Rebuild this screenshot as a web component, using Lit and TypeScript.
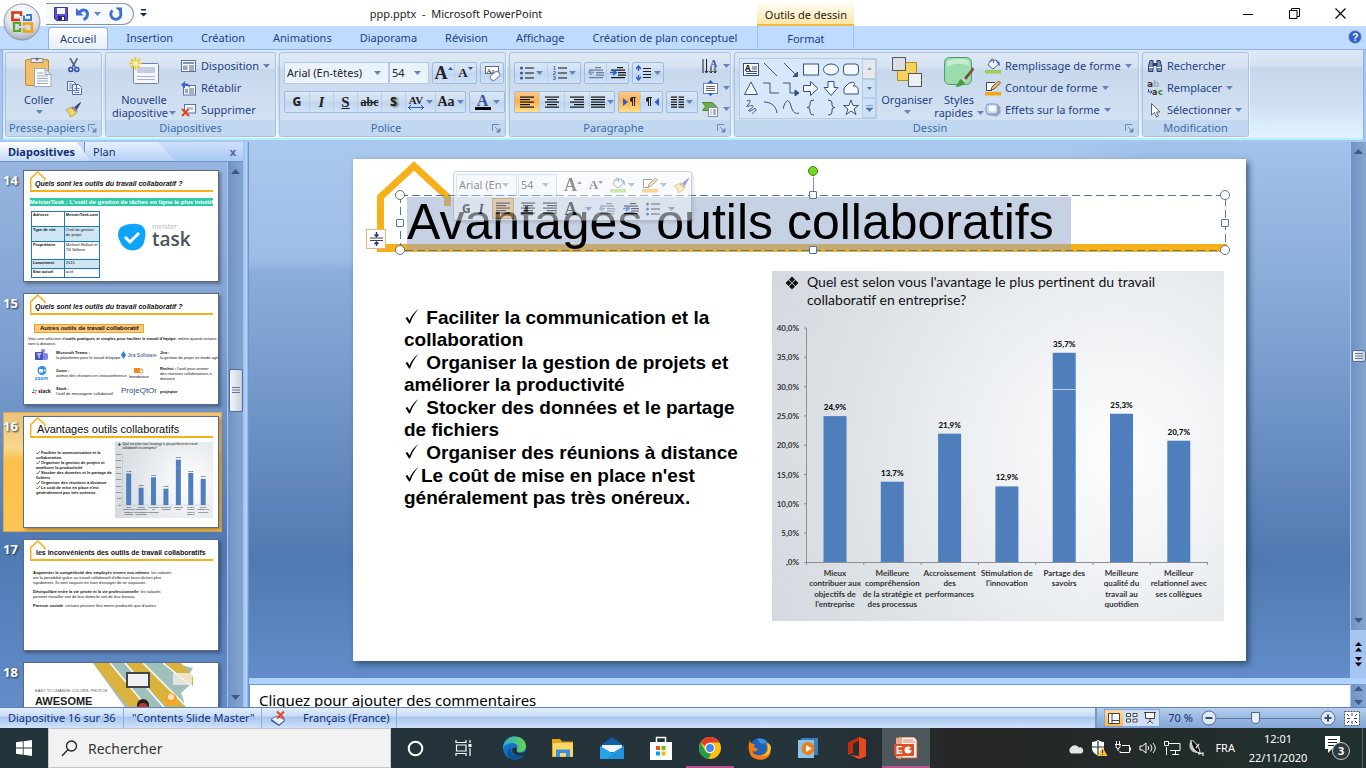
import { LitElement, html, svg, css } from "lit";
import { customElement } from "lit/decorators.js";
import { classMap } from "lit/directives/class-map.js";

const ic = (w: number, h: number, c: unknown) =>
  html`<svg class="ic" width=${w} height=${h} viewBox="0 0 ${w} ${h}" aria-hidden="true">${c}</svg>`;

const caret = html`<svg class="ic caret" width="7" height="4" viewBox="0 0 7 4" aria-hidden="true"><path d="M0 0h7L3.500 4z" fill="#5f86bd"/></svg>`;

const lines = (rows: [number, number][], color = "#111", y0 = 0) =>
  rows.map(([x, w], i) => svg`<rect x=${x} y=${y0 + i * 2.5} width=${w} height="1.200" fill=${color} />`);

/* ---------- ribbon icons ---------- */
const I = {
  office: () => ic(38, 38, svg`
    <defs><radialGradient id="orb" cx=".5" cy=".25" r=".8"><stop offset="0" stop-color="#fff"/><stop offset=".6" stop-color="#dfe3ea"/><stop offset="1" stop-color="#9aa3b4"/></radialGradient></defs>
    <circle cx="19" cy="19" r="18" fill="url(#orb)" stroke="#8b95a8"/>
    <path d="M8 21a11 8 0 0 1 22 0a12 12 0 0 1-22 0z" fill="#c3cad8" opacity=".5"/>
    <g fill="none" stroke-width="2.600">
      <path d="M17 17H9.500V9.500H18v3.500" stroke="#d4380f"/>
      <path d="M21 12.500V17h7v-5h-5" stroke="#3b7fc4" stroke-width="2"/>
      <path d="M17 23v-3h-6v8h6v-3" stroke="#59a52c" stroke-width="2.200"/>
      <path d="M21 25v3.500h8V20.500h-8v2" stroke="#f2a20c"/></g>`),
  save: () => ic(14, 14, svg`<path d="M.5.5h13v13h-11l-2-2z" fill="#5a55c9" stroke="#3a3596"/><rect x="3" y="1" width="8" height="6" fill="#f3f6ff"/><rect x="4" y="9" width="7" height="4.500" fill="#2c2878"/><rect x="8" y="10" width="2" height="3" fill="#fff"/>`),
  undo: () => ic(14, 14, svg`<path d="M0 1v7.500h7.500z" fill="#3e6fd0"/><path d="M3 6C6 1.500 11.500 2.500 11.500 7C11.500 10 10 11.500 7.500 12.500" fill="none" stroke="#3e6fd0" stroke-width="3"/>`),
  redo: () => ic(14, 14, svg`<path d="M3.500 3.500A5 5 0 1 0 11 4.500" fill="none" stroke="#3e6fd0" stroke-width="3"/><path d="M6.500.5h6.500V7z" fill="#3e6fd0"/>`),
  qat: () => ic(7, 8, svg`<path d="M1 0h5v1.400H1zM0 4h7L3.500 7.500z" fill="#15294f"/>`),
  paste: () => ic(28, 31, svg`<rect x=".5" y="2.500" width="23" height="26" rx="1.500" fill="#efc069" stroke="#c08c37"/><path d="M6 1.500h12v4H6z" fill="#e9e9ec" stroke="#85868c"/><circle cx="12" cy="2" r="1.600" fill="#6f7076"/><path d="M9.500 11.500H20l6 6v12H9.500z" fill="#fff" stroke="#9aa9c2"/><path d="M20 11.500v6h6z" fill="#dce6f4" stroke="#9aa9c2"/><path d="M12 16h6M12 19h11M12 21.500h11M12 24h11M12 26.500h11" stroke="#93a4c4" fill="none"/>`),
  cut: () => ic(12, 15, svg`<path d="M2 0l5 9M9.500 0l-5 9" stroke="#56657f" stroke-width="1.600"/><circle cx="2.800" cy="11.500" r="2" fill="none" stroke="#2c4fa5" stroke-width="1.500"/><circle cx="8.800" cy="11.500" r="2" fill="none" stroke="#2c4fa5" stroke-width="1.500"/>`),
  copy: () => ic(15, 14, svg`<path d="M.5.5h6l3 3v6h-9zM5.500 3.500h6l3 3v7h-9z" fill="#f5f9ff" stroke="#4c6fb4"/><path d="M2 3h3M2 5h3M2 7h3M7.500 7.500h5M7.500 9.500h5M7.500 11.500h5" stroke="#5f84c8"/>`),
  brush: () => ic(16, 15, svg`<path d="M14.500.5l-6 5 2 2z" fill="#4b4f93" stroke="#33376f"/><path d="M7 4l5 5-2 1-5-4z" fill="#8d8fa5"/><path d="M5 5.500l5.500 5C9 13 6 14.500 4 14.500C4 12 1.500 8.500 0 8z" fill="#f2d66b" stroke="#a58625" stroke-width=".7"/>`),
  newSlide: () => ic(30, 29, svg`<rect x="4.500" y="6.500" width="25" height="20" rx="1" fill="#f3f7fd" stroke="#6d84ab"/><rect x="8" y="10" width="18" height="6" fill="#c3cce0"/><path d="M8 19.500h18M8 22.500h18" stroke="#a9b4cc"/><path d="M6.500 0v13M0 6.500h13M2 2l9 9M11 2l-9 9" stroke="#f3c310" stroke-width="1.700"/><circle cx="6.500" cy="6.500" r="2.500" fill="#fff8c0"/>`),
  layout: () => ic(16, 13, svg`<rect x=".5" y=".5" width="14" height="11" fill="#f4f8fd" stroke="#5874a5"/><rect x="2" y="2" width="11" height="2" fill="#7f94bb"/><rect x="2" y="5.500" width="4.500" height="4.500" fill="#94a7c9"/><path d="M8 6h5M8 8h5M8 10h5" stroke="#56677f"/>`),
  reset: () => ic(16, 15, svg`<rect x="2.500" y="4.500" width="12" height="9.500" fill="#f4f8fd" stroke="#5874a5"/><path d="M8 8h5M8 10h5M8 12h5" stroke="#56677f"/><rect x="4" y="8" width="3" height="4" fill="#94a7c9"/><path d="M0 4l4-4v2.500c4 0 5 2 5 4.500C8 5.500 7 5 4 5v2.500z" fill="#3a64bf"/>`),
  del: () => ic(16, 13, svg`<rect x="3.500" y=".5" width="11" height="8.500" fill="#f4f8fd" stroke="#5874a5"/><rect x="6" y="3" width="6" height="3" fill="#b5c2da"/><path d="M1 5l7 7M7.500 5L1 12" stroke="#e2421c" stroke-width="2"/>`),
  clear: () => ic(17, 17, svg`<rect x="1.500" y="1.500" width="13" height="7" fill="#fff" stroke="#5a6b8a"/><text x="2.500" y="8" font-size="7" font-family="Liberation Serif" fill="#111">Aa</text><rect x="6" y="8" width="10" height="6" rx="2.500" fill="#f6f8fc" stroke="#7c8cab" transform="rotate(-40 11 11)"/>`),
  bullets: (c = "#111") => ic(14, 14, svg`<g fill="#35519b"><circle cx="1.500" cy="2" r="1.500"/><circle cx="1.500" cy="7" r="1.500"/><circle cx="1.500" cy="12" r="1.500"/></g><path d="M5 2h9M5 7h9M5 12h9" stroke=${c} stroke-width="1.200"/>`),
  numbers: () => ic(14, 14, svg`<g fill="#35519b" font-size="5" font-weight="700" font-family="Liberation Sans"><text x="0" y="4">1</text><text x="0" y="9">2</text><text x="0" y="14">3</text></g><path d="M5 2h9M5 7h9M5 12h9" stroke="#111" stroke-width="1.200"/>`),
  outdent: () => ic(16, 14, svg`${lines([[7, 6], [1, 14], [8, 8], [8, 8], [1, 14]], "#6c7a92", 1)}<path d="M6 6.500H2M3.500 4L1 6.500 3.500 9" stroke="#7a97c7" stroke-width="1.500" fill="none"/>`),
  indent: () => ic(16, 14, svg`${lines([[7, 6], [1, 14], [8, 8], [8, 8], [1, 14]], "#111", 1)}<path d="M0 6.500h5M3 4l3 2.500L3 9" stroke="#2f5fc9" stroke-width="1.700" fill="none"/>`),
  spacing: () => ic(16, 16, svg`<path d="M2.500 1v5M2.500 10v5M0 4l2.500-3L5 4M0 12l2.500 3L5 12" stroke="#2f5fc9" stroke-width="1.500" fill="none"/><path d="M7 3.500h8M7 6.500h8M7 9.500h8M7 12.500h8" stroke="#222"/>`),
  left: (c = "#111") => ic(14, 13, lines([[0, 14], [0, 10], [0, 14], [0, 10], [0, 14]], c, .5)),
  center: (c = "#111") => ic(14, 13, lines([[0, 14], [2, 10], [0, 14], [2, 10], [0, 14]], c, .5)),
  right: (c = "#111") => ic(14, 13, lines([[0, 14], [4, 10], [0, 14], [4, 10], [0, 14]], c, .5)),
  justify: () => ic(14, 13, lines([[0, 14], [0, 14], [0, 14], [0, 14], [0, 14]], "#111", .5)),
  ltr: () => ic(14, 12, svg`<path d="M0 2l5 4-5 4z" fill="#2f5fc9"/><path d="M9.500 1.500V10M11.500 1.500V10M13 1.500H9" stroke="#222" fill="none"/><path d="M9.500 1a2.500 2.500 0 0 0 0 5z" fill="#222"/>`),
  rtl: () => ic(14, 12, svg`<path d="M14 2L9.500 6l4.500 4z" fill="#2f5fc9"/><path d="M3.500 1.500V10M5.500 1.500V10M7 1.500H3" stroke="#222" fill="none"/><path d="M3.500 1a2.500 2.500 0 0 0 0 5z" fill="#222"/>`),
  columns: () => ic(13, 13, svg`${lines([[0, 6], [0, 6], [0, 6], [0, 6], [0, 6]], "#111", .5)}${lines([[7.500, 6], [7.500, 6], [7.500, 6], [7.500, 6], [7.500, 6]], "#111", .5)}`),
  textdir: () => ic(17, 16, svg`<path d="M1 1v14M4.500 1v13M9 9v5M13 9v5" stroke="#222" fill="none"/><text x="8" y="9" font-size="10" font-weight="700" font-family="Liberation Serif" fill="#35519b">A</text><path d="M3 13l1.500 2L6 13M7.500 13L9 15l1.500-2M11.500 13l1.500 2 1.500-2" stroke="#222" fill="none"/>`),
  valign: () => ic(17, 16, svg`<rect x="1.500" y="3.500" width="14" height="10" fill="#fdfefe" stroke="#6d84ab"/><path d="M4 6.500h9M4 8.500h9M4 10.500h9" stroke="#667"/><path d="M5.500 3h6l-3-3zM5.500 13h6l-3 3z" fill="#2f5fc9"/>`),
  smartart: () => ic(17, 16, svg`<path d="M.5 1.500h10l4 4-4 4h-10l3-4z" fill="#6fae4c" stroke="#4b8a2d"/><rect x="6.500" y="6.500" width="9" height="9" fill="#fafcff" stroke="#7e8ea9"/><path d="M8.500 9h1M11 9h3M8.500 11h1M11 11h3M8.500 13h1M11 13h3" stroke="#667"/>`),
  arrange: () => ic(31, 30, svg`<rect x="5.500" y="5.500" width="19" height="18" fill="#f5d35b" stroke="#b48c20"/><rect x=".5" y=".5" width="13" height="13" fill="#dadde1" stroke="#55595f"/><rect x="16.500" y="16.500" width="13" height="13" fill="#eceef2" stroke="#55595f"/>`),
  styles: () => ic(31, 31, svg`<rect x=".5" y=".5" width="27" height="27" rx="5" fill="#9adcae" stroke="#4d9e68"/><path d="M3 4c8-3 16-3 22 0v5C18 6 10 6 3 10z" fill="#c5eed0"/><path d="M29 10L20 21l2 2 8-10z" fill="#7a5030"/><path d="M19 20l4 4-3 2-3-3z" fill="#c8ccd4"/><path d="M17 22l4 4c-3 3-7 4-10 4c3-2 3-6 6-8z" fill="#4a9a3e"/>`),
  fill: () => ic(16, 16, svg`<path d="M5 3l6-1 3 4-6 5-5-4z" fill="#eef3fa" stroke="#5a6f96"/><path d="M6 4V1.500q1-1.500 2.500 0V5" fill="none" stroke="#5a6f96"/><path d="M11 2.500c4 0 4.500 4 3.500 6C13 6 12 5 11 2.500z" fill="#3e74c7"/><rect y="12" width="16" height="3.500" fill="#9bd055"/>`),
  pen: () => ic(16, 15, svg`<path d="M10 1.500H1.500v8H7" fill="#fff" stroke="#444"/><path d="M13.500 0l2 2-6.500 6-3 1 1-3z" fill="#eebf72" stroke="#54380f" stroke-width=".8"/><rect y="11" width="16" height="3.500" fill="#f5a816"/>`),
  effects: () => ic(16, 14, svg`<path d="M2 12l10 1.500L15.500 10V4L12 1z" fill="#98a4c0"/><rect x="1" y="1" width="12" height="10" rx="3" fill="#c9d8f5" stroke="#7d93c4"/><rect x="4" y="2.500" width="7" height="6" rx="2" fill="#f6faff"/>`),
  find: () => ic(16, 14, svg`<path d="M1.500 12.500V7L3 1.500h3v11zM14.500 12.500V7L13 1.500h-3v11z" fill="#7c8fb9" stroke="#28406f"/><rect x="6" y="4" width="4" height="3" fill="#28406f"/><path d="M2 8.500h4M10 8.500h4" stroke="#fff"/>`),
  replace: () => ic(17, 16, svg`<g font-family="DejaVu Sans" font-weight="700" font-size="9"><text x="0" y="7" fill="#333">a</text><text x="6" y="7" fill="#a8acb4">b</text><text x="5" y="15" fill="#333" font-size="8">a</text><text x="11" y="15" fill="#2e8a2a" font-size="8">c</text></g><path d="M1.500 9v3h3M3.500 10.500l1.500 1.500-1.500 1.500" stroke="#35519b" fill="none"/>`),
  select: () => ic(16, 15, svg`<path d="M4.500.5v11.500l3-2.500 2 4.500 2-1-2-4h3.500z" fill="#fff" stroke="#5b6273"/>`),
  help: () => ic(14, 14, svg`<circle cx="7" cy="7" r="6.500" fill="#2f62c9" stroke="#9fb5d8"/><text x="4.300" y="11" font-size="10" font-weight="700" font-family="Liberation Sans" fill="#fff">?</text>`),
  launcher: () => ic(9, 9, svg`<path d="M.5 7V.5H7" fill="none" stroke="#6d88b5"/><path d="M3 3l4 4M8 4.500V8H4.500z" stroke="#6d88b5" fill="#6d88b5"/>`),
  spell: () => ic(17, 17, svg`<path d="M1 9l6-3 8 4-6 5z" fill="#eaf1fc" stroke="#5a74a8"/><path d="M1 9v2l8 5 6-5v-1l-6 5z" fill="#3d5c9c"/><path d="M7 1.500l7 7M14 1.500l-7 7" stroke="#e5472a" stroke-width="2"/>`),
};

/* ---------- shape gallery ---------- */
const shapeDefs = [
  svg`<rect x=".5" y="2.500" width="15" height="12" fill="#fff"/><path d="M9 6h5M9 8h5M3 10.500h11M3 12.500h11"/><text x="2" y="9.500" font-size="8" font-weight="700" fill="#111" stroke="none">A</text>`,
  svg`<path d="M1 2l13 13"/>`,
  svg`<path d="M1 2l13 13M14.500 11v4.500H10z" fill="#33507f"/>`,
  svg`<rect x=".5" y="3" width="15" height="11"/>`,
  svg`<ellipse cx="8" cy="8.500" rx="7.500" ry="5.500"/>`,
  svg`<rect x=".5" y="3" width="15" height="11" rx="3"/>`,
  svg`<path d="M8 2L1.500 14.500h13z"/>`,
  svg`<path d="M0 3h7v10h9" fill="none"/>`,
  svg`<path d="M0 3h7v10h7" fill="none"/><path d="M12 10l4 3-4 3z" fill="#33507f"/>`,
  svg`<path d="M.5 5.500h7v-4L15 8.500l-7.500 7v-4h-7z"/>`,
  svg`<path d="M5 1.500h6v6h4L8 15.500 1 7.500h4z"/>`,
  svg`<path d="M1 13V8l5-5c6-2 7 1 4 3c5-1 6 4 5 8H3q-2 0-2-1z"/>`,
  svg`<path d="M4 2c6-3 2 3 0 5s5-2 6 0-6 4-4 5 6-4 7-2-4 3-3 5" fill="none"/>`,
  svg`<path d="M1 3c7 0 12 4 13 11" fill="none"/>`,
  svg`<path d="M0 10C3-1 6 0 8 7s4 8 8 7" fill="none"/>`,
  svg`<path d="M11 1q-4 0-4 3v2q0 2.500-3 2.500q3 0 3 2.500v2q0 3 4 3" fill="none"/>`,
  svg`<path d="M5 1q4 0 4 3v2q0 2.500 3 2.500q-3 0-3 2.500v2q0 3-4 3" fill="none"/>`,
  svg`<path d="M8 1l2 5.500h5.500L11 10l2 5.500L8 12l-5 3.500L5 10 .5 6.500H6z"/>`,
];

/* ---------- taskbar icons ---------- */
const T = {
  win: () => ic(16, 16, svg`<path d="M0 2.300L6.800 1.300V7.600H0zM7.600 1.200L16 0V7.600H7.600zM0 8.400H6.800V14.700L0 13.700zM7.600 8.400H16V16L7.600 14.800z" fill="#fff"/>`),
  search: () => ic(17, 17, svg`<circle cx="10.500" cy="6" r="5" fill="none" stroke="#222" stroke-width="1.300"/><path d="M7 9.500L1 16" stroke="#222" stroke-width="1.300"/>`),
  cortana: () => ic(17, 17, svg`<circle cx="8.500" cy="8.500" r="6.800" fill="none" stroke="#fff" stroke-width="2"/>`),
  taskview: () => ic(17, 16, svg`<path d="M1 0v2.500h10V0M1 16v-2.500h10V16M1.500 5h9.500v6H1.500zM15 0v3M15 8v8" fill="none" stroke="#fff" stroke-width="1.200"/><rect x="13.500" y="4" width="3" height="3" fill="#fff"/>`),
  edge: () => ic(25, 24, svg`<defs><linearGradient id="eg" x1="0" x2="1"><stop offset="0" stop-color="#2aa7dd"/><stop offset="1" stop-color="#63d64a"/></linearGradient></defs><circle cx="12.500" cy="12" r="11.500" fill="#1573c4"/><path d="M1 13C1 5 6 .5 13 .5c6 0 11 4 11 9.500 0 4-3 6-6.500 6-3 0-3.500-1.500-2.500-3C17 10 14 7 10 7 6 7 2 9 1 13z" fill="url(#eg)"/><path d="M9 12c-1 6 3 10 12 7-3 4-8 5-12 3.500C4 20 4 14 9 12z" fill="#0d5299"/><path d="M15 13c-1 2 0 4 3 4 3 0 5-1 6-2l-2 4c-6 2-12 0-12-5 0-3 4-4 5-1z" fill="#22323a"/>`),
  explorer: () => ic(22, 18, svg`<path d="M0 0h8l2 2.500h11V18H0z" fill="#e8a317"/><path d="M1 4h20v13.500H1z" fill="#fbd768"/><path d="M4 18v-7.500h14V18h-4v-4H8v4z" fill="#3b8fdc"/>`),
  mail: () => ic(24, 22, svg`<path d="M0 9L12 0l12 9v12H0z" fill="#0f5fae"/><path d="M2 8h20v7H2z" fill="#f2f4f7"/><path d="M0 9l12 7 12-7v13H0z" fill="#28a2ea"/><path d="M24 9v13H6z" fill="#1f8ad6" opacity=".7"/>`),
  store: () => ic(24, 24, svg`<path d="M7.500 7V1.500h9V7" fill="none" stroke="#fff" stroke-width="1.500"/><path d="M1 6h22v18H1z" fill="#fff"/><path d="M7 10h4v4H7z" fill="#f25022"/><path d="M12.500 10h4v4h-4z" fill="#7fba00"/><path d="M7 15.500h4v4H7z" fill="#00a4ef"/><path d="M12.500 15.500h4v4h-4z" fill="#ffb900"/>`),
  chrome: () => ic(22, 22, svg`<circle cx="11" cy="11" r="11" fill="#fbc116"/><path d="M11 0A11 11 0 0 1 20.500 5.500H11a5.500 5.500 0 0 0-5 3.500L1.500 5.500A11 11 0 0 1 11 0z" fill="#e33b2e"/><path d="M1.500 5.500L6.200 13.700A5.500 5.500 0 0 0 12 16.400L9.500 22A11 11 0 0 1 1.500 5.500z" fill="#229b4a"/><circle cx="11" cy="11" r="5" fill="#fff"/><circle cx="11" cy="11" r="3.900" fill="#4285f4"/>`),
  firefox: () => ic(23, 23, svg`<circle cx="12" cy="11" r="10" fill="#1c63b8"/><path d="M9 2c5-1 9 1 10 4l-6 1z" fill="#3a93dc"/><path d="M2 3c0 2 1 4 5 4-2 2-1 4 3 5-1 3-4 3-6 2 3 6 11 5 14 1 2-3 1-7-1-10 6 4 7 10 4 14-4 5-13 5-18 0C0 14 0 7 2 3z" fill="#f07c13"/><path d="M19 6c3 6 0 12-6 13 6 1 10-3 10-9-1-2-2-4-4-4z" fill="#fcc52c"/>`),
  media: () => ic(21, 20, svg`<path d="M3 0h17v17H3z" fill="#3d7fb8"/><path d="M0 2h16v18H0z" fill="#8cc3ea"/><circle cx="10" cy="10.500" r="6.500" fill="#ee7e16"/><path d="M8 7l6 3.500L8 14z" fill="#fff"/>`),
  ms365: () => ic(18, 22, svg`<path d="M0 5.500L11 0v3.500L5 6.500V16l-5 2z" fill="#c22c10"/><path d="M11 0l7 2.500v17L11 22l-9-4 9 1z" fill="#e8481d"/>`),
  ppt: () => ic(24, 22, svg`<path d="M7 0h13l3 3v18H7z" fill="#fdf6f3" stroke="#d6542b"/><path d="M2 1l5-1v22l-5-1z" fill="#f0a68d"/><path d="M9 3h10M9 5h12" stroke="#e57a52"/><rect x="0" y="7" width="20" height="12" rx="1" fill="#dd4f24"/><text x="2" y="16.500" font-size="10" font-weight="700" font-family="Liberation Sans" fill="#fff">E</text><circle cx="14" cy="13" r="3.500" fill="#fff"/><path d="M14 13h4v-3z" fill="#dd4f24"/>`),
  cloud: () => ic(17, 11, svg`<path d="M4 10.500a4 4 0 0 1 0-6.500A5 5 0 0 1 12 4.500a3 3 0 0 1 2 6z" fill="#e4e6e6"/>`),
  shield: () => ic(17, 16, svg`<path d="M7 0c2 1 4 2 6 2v6c0 4-3 6-6 7.500C4 14 1 12 1 8V2c2 0 4-1 6-2z" fill="#fff"/><path d="M7 1v14M1 7h12" stroke="#25353a" stroke-width="1.200"/><path d="M11.500 7l5 9h-10z" fill="#fbc02d"/><path d="M11.500 10v3M11.500 14v1" stroke="#222"/>`),
  battery: () => ic(17, 14, svg`<path d="M7 4.500h7.500v7H5V10M15.500 6.500v3" fill="none" stroke="#fff"/><path d="M1.500 0v3M4.500 0v3M0 3.500h6M1 4v1.500a2 2 0 0 0 4 0V4M3 7.500V10" fill="none" stroke="#fff"/>`),
  sound: () => ic(18, 14, svg`<path d="M1 5h2.500L7 2v10L3.500 9H1z" fill="none" stroke="#fff"/><path d="M9 5q1.500 2 0 4M11.500 3.500q3 3.500 0 7M14 2q4.500 5 0 10" fill="none" stroke="#fff"/>`),
  net: () => ic(17, 15, svg`<path d="M5 2.500h11v7H6M8 13.500h7M11.500 9.500v4M2.500 6v8" fill="none" stroke="#fff"/><path d="M.5.5h4v4h-4z" fill="none" stroke="#fff"/>`),
  dish: () => ic(17, 16, svg`<path d="M3 0c-4 7 0 14 9 13z" fill="#c5c9cb"/><path d="M3 0c4 1 9 8 9 13-6-1-9-8-9-13z" fill="#0d1012" stroke="#dfe2e3"/><path d="M8 8l3-4M10 14l5-1v3" stroke="#dfe2e3" stroke-width="1.300" fill="none"/>`),
  notif: () => ic(26, 24, svg`<path d="M0 0h15v13H7l-4 4v-4H0z" fill="#fff"/><path d="M3 3.500h9M3 6.500h9M3 9.500h6" stroke="#222"/><circle cx="16" cy="15" r="8.500" fill="#2e3a40" stroke="#c9cdcf"/><text x="13" y="19" font-size="11" font-weight="700" font-family="Noto Sans" fill="#fff">3</text>`),
};

/* ---------- chart ---------- */
const chartData = [
  { v: 24.9, t: "24,9%", l: ["Mieux", "contribuer aux", "objectifs de", "l'entreprise"] },
  { v: 13.7, t: "13,7%", l: ["Meilleure", "compréhension", "de la stratégie et", "des processus"] },
  { v: 21.9, t: "21,9%", l: ["Accroissement", "des", "performances"] },
  { v: 12.9, t: "12,9%", l: ["Stimulation de", "l'innovation"] },
  { v: 35.7, t: "35,7%", l: ["Partage des", "savoirs"] },
  { v: 25.3, t: "25,3%", l: ["Meilleure", "qualité du", "travail au", "quotidien"] },
  { v: 20.7, t: "20,7%", l: ["Meilleur", "relationnel avec", "ses collègues"] },
];
const ticks = ["40,0%", "35,0%", "30,0%", "25,0%", "20,0%", "15,0%", "10,0%", "5,0%", ",0%"];

const chart = () => html`<svg class="chart" viewBox="0 0 452 350" role="img" aria-label="Avantages du travail collaboratif">
  <path d="M20 5.500l3 3-3 3-3-3zM20 12.500l3 3-3 3-3-3zM16.500 9l3 3-3 3-3-3zM23.500 9l3 3-3 3-3-3z" fill="#111"/>
  <g font-size="14" fill="#111"><text x="35" y="16">Quel est selon vous l'avantage le plus pertinent du travail</text><text x="35" y="34">collaboratif en entreprise?</text></g>
  <g font-size="8" font-weight="700" fill="#333" text-anchor="end">${ticks.map((t, i) => svg`<text x="27" y=${60 + i * 29.3}>${t}</text>`)}</g>
  <path d=${"M34.500 57V291.500H436" + ticks.map((_, i) => `M32 ${57 + i * 29.300}h2.500`).join("") + [0, 1, 2, 3, 4, 5, 6, 7].map((i) => `M${34.500 + i * 57.300} 291v3`).join("")} fill="none" stroke="#8b9096"/>
  ${chartData.map((d, i) => {
    const cx = 63 + i * 57.3, h = d.v * 5.86;
    return svg`<rect x=${cx - 11.5} y=${291 - h} width="23" height=${h} fill="#4e7ebc"/>
      ${i === 4 ? svg`<path d=${`M${cx - 11.5} 118.500h23`} stroke="#b9cde6"/>` : null}
      <text x=${cx} y=${285 - h} font-size="8" font-weight="900" fill="#111" text-anchor="middle">${d.t}</text>
      <g font-size="8" font-weight="700" fill="#333" text-anchor="middle">${d.l.map((l, j) => svg`<text x=${cx} y=${305 + j * 10.3}>${l}</text>`)}</g>`;
  })}
</svg>`;

const bulletItems: [string, boolean][] = [
  ["Faciliter la communication et la collaboration", true],
  ["Organiser la gestion de projets et améliorer la productivité", true],
  ["Stocker des données et le partage de fichiers", true],
  ["Organiser des réunions à distance", true],
  ["Le coût de mise en place n'est généralement pas très onéreux.", false],
];

const house = (cls: string) => html`<svg class=${cls} viewBox="0 0 76 90" aria-hidden="true"><path d="M3.500 89V36L37 5l33.500 31v9" fill="none" stroke="#f6b01a" stroke-width="7"/></svg>`;

@customElement("app-root")
export class AppRoot extends LitElement {
  static styles = css`
    :host { display: block; font: 11px/16px "Noto Sans", sans-serif; color: #1e3f85; }
    * { box-sizing: border-box; }
    button, select, input, textarea { font: inherit; color: inherit; border: 0; margin: 0; padding: 0; background: none; border-radius: 0; outline: 0; }
    ul { list-style: none; margin: 0; padding: 0; }
    h1, h2, p { margin: 0; font: inherit; }
    .ic { display: block; flex: none; }
    .app { height: 100vh; min-height: 600px; display: flex; flex-direction: column; overflow: hidden; background: #a9c6ee; position: relative; }

    /* title bar */
    .titlebar { height: 26px; flex: none; display: grid; grid-template-columns: 456px 1fr 140px; align-items: center; background: #fff; color: #222; }
    .qat { display: flex; align-items: center; gap: 8px; height: 22px; margin: 2px 0 0 46px; width: 88px; padding-left: 8px; border: 1px solid #8693a8; border-left: 0; border-radius: 0 12px 12px 0; color: #222; background: #f6f9fe; }
    .undo { display: flex; align-items: center; gap: 4px; }
    .qatwrap { display: flex; align-items: center; gap: 6px; }
    .apptitle { text-align: center; width: 200px; justify-self: start; margin-left: -100px; padding-top: 2px; white-space: nowrap; }
    .winbtns { display: flex; justify-content: flex-end; gap: 35px; padding-right: 20px; }
    .office { position: absolute; left: 3px; top: 3px; z-index: 2; }

    /* ribbon tabs */
    .tabs { height: 24px; flex: none; display: flex; background: #bfdbff; padding-left: 48px; align-items: flex-end; border-bottom: 1px solid #8db2e3; position: relative; }
    .tab { height: 22px; padding: 0 14px; line-height: 22px; white-space: nowrap; }
    .tab.on { padding: 0 11px; margin: 0 4px 0 0; background: linear-gradient(#fff, #e6effa); border: 1px solid #8db2e3; border-bottom: 0; border-radius: 4px 4px 0 0; line-height: 21px; }
    .ctx { width: 97px; margin-left: 6px; align-self: stretch; position: relative; text-align: center; padding-top: 2px; border: solid #a5c0e2; border-width: 0 1px; }
    .ctx .tab { padding: 0; }
    .ctxlabel { position: absolute; left: -1px; right: -1px; top: -26px; height: 26px; line-height: 29px; color: #1c1c1c; background: linear-gradient(#fff, #fbe7a8); border-bottom: 2px solid #f5b739; white-space: nowrap; }
    .help { margin: 0 4px 5px auto; }

    /* ribbon */
    .ribbon { flex: none; height: 90px; margin: 0 2px; padding: 2px 2px 1px; display: flex; gap: 3px; background: linear-gradient(#dce8f6, #d3e1f2 18%, #c6d7ec 20%, #cfdff2 60%, #e2f3ff); border: 1px solid #8db2e3; border-top: 0; border-bottom: 2px solid #b4f0fb; border-radius: 0 0 3px 3px; }
    .group { display: flex; flex-direction: column; border: 1px solid #a6c3e6; border-radius: 3px; background: linear-gradient(#dfe9f5, #d4e1f1 18%, #c8d8ec 20%, #d7e5f4); box-shadow: 1px 1px 0 #eff6ff; flex: none; }
    .gbody { flex: 1; display: flex; padding: 0 4px; min-height: 0; }
    .glabel { height: 16px; background: #c1d8f0; text-align: center; color: #3e6aaa; display: flex; align-items: center; justify-content: center; border-radius: 0 0 3px 3px; white-space: nowrap; }
    .glabel span { flex: 1; }
    .glabel .ic { margin-right: 4px; }
    .w1 { width: 97px; } .w2 { width: 171px; } .w3 { width: 227px; } .w4 { width: 222px; } .w5 { width: 405px; } .w6 { width: 107px; }
    .big { display: flex; flex-direction: column; align-items: center; padding-top: 4px; line-height: 13px; flex: none; }
    .big .pic { height: 36px; }
    .big .row { display: flex; align-items: center; gap: 4px; }
    .big > .caret { margin-top: 4px; }
    .bigc { width: 60px; } .bign { width: 68px; } .bigo { width: 56px; } .bigs { width: 52px; }
    .bign .row { gap: 1px; }
    .w2 .col { padding-left: 3px; }
    .w1 .big { padding-right: 2px; } .w1 .col { margin-left: -4px; }
    .col { display: flex; flex-direction: column; padding-top: 2px; }
    .item { height: 22px; display: flex; align-items: center; gap: 4px; white-space: nowrap; line-height: 22px; }
    .slot { width: 16px; display: flex; justify-content: center; }
    .stack { display: flex; flex-direction: column; gap: 7px; padding-top: 9px; }
    .bar { display: flex; gap: 3px; height: 22px; }
    .tg { display: flex; border: 1px solid #9ebbe0; border-radius: 2px; background: linear-gradient(#dbe8f6, #cbdcf0 48%, #bfd4ee 50%, #d0e2f6); }
    .tb { display: flex; align-items: center; justify-content: center; gap: 2px; color: #222; flex: 1; white-space: nowrap; }
    .tb + .tb { border-left: 1px solid #b9cfea; }
    .tb.hot { background: linear-gradient(#fbc68c, #fdb14d 48%, #fbe08a); }
    .t24 { flex: 0 0 24px; } .g44 { width: 45px; } .g67 { width: 67px; } .g32 { width: 32px; } .g101 { width: 101px; } .g24 { width: 24px; } .g36 { width: 36px; } .g181 { width: 182px; }
    .serif { font: 700 14px/16px "Liberation Serif", serif; }
    .serif.i, .serif.u { font-size: 15px; }
    .big-a { font-size: 18px; gap: 0; } .small-a { font-size: 13px; gap: 0; }
    .b { font-weight: 800; font-size: 12px; } .i { font-style: italic; } .u { text-decoration: underline; } .s { text-decoration: line-through; font-size: 12px; } .sh { text-shadow: 2px 1px 2px #666; }
    .tick { align-self: flex-start; margin-top: 4px; }
    .av { display: flex; flex-direction: column; align-items: center; font: 700 11px/10px "Liberation Serif", serif; }
    .fc { display: flex; flex-direction: column; align-items: center; font: 700 16px/13px "Liberation Serif", serif; color: #35519b; border-bottom: 3px solid #000; width: 16px; }
    .combos { display: flex; }
    .combo { display: grid; grid-template-columns: 1fr 14px; align-items: center; background: #eaf2fb; border: 1px solid #b3cbea; height: 22px; color: #222; }
    .combo select { grid-area: 1 / 1 / 2 / 3; appearance: none; width: 100%; height: 20px; padding-left: 2px; color: #222; }
    .combo .caret { grid-area: 1 / 2; pointer-events: none; }
    .cf { width: 105px; } .cs { width: 40px; }
    .side { padding-left: 4px; }
    .gallery { display: flex; margin-top: 5px; height: 61px; border: 1px solid #b5cce8; background: #d9e8f8; flex: none; }
    .shapes { display: grid; grid-template-columns: repeat(6, 20px); grid-template-rows: repeat(3, 19px); place-items: center; padding: 1px; stroke: #33507f; fill: #f4f9ff; }
    .gscroll { width: 14px; display: flex; flex-direction: column; }
    .gscroll button { flex: 1; display: grid; place-items: center; border: 1px solid #b5cce8; background: #cfe1f6; }
    .gscroll button:first-child { background: #e6e8ea; }

    /* workspace */
    .work { flex: 1; display: flex; min-height: 0; padding-top: 2px; }
    .pane { width: 243px; flex: none; display: flex; flex-direction: column; background: #7fa3d4; }
    .ptabs { height: 20px; flex: none; display: flex; align-items: stretch; background: linear-gradient(#cfe1fa, #a8c8f2); border-bottom: 1px solid #6c94cf; line-height: 19px; color: #10307a; }
    .ptab { width: 91px; margin-right: -7px; text-align: left; padding-left: 8px; background: linear-gradient(#fff, #c4daf7); font-weight: 700; clip-path: polygon(0 0, 84% 0, 100% 100%, 0 100%); position: relative; z-index: 1; }
    .ptab2 { width: 92px; padding-left: 8px; text-align: left; background: linear-gradient(#e6f0fd, #b5d0f5); clip-path: polygon(0 0, 80% 0, 100% 100%, 0 100%); border-left: 1px solid #6c94cf; }
    .pclose { margin-left: auto; padding-right: 7px; font-weight: 700; color: #4c6ba6; }
    .pbody { flex: 1; display: flex; min-height: 0; }
    .thumbs { flex: 1; min-height: 0; overflow: hidden; display: flex; flex-direction: column; padding: 4px 5px 0 3px; background: linear-gradient(#97b5df, #7c9fd0 35%, #4f79b3 70%, #628dc9); }
    .trow { flex: none; display: grid; grid-template-columns: 20px 196px; gap: 0; padding: 4px 4px 4px 0; margin-bottom: 3px; height: 120px; }
    .trow.sel { background: linear-gradient(#e9c27a, #f7d88e 30%, #fdc04a 40%, #fcc552); box-shadow: inset 0 0 0 1px #d9a94f; }
    .num { color: #fff; font: 700 13px/20px "Noto Sans", sans-serif; text-shadow: 1px 1px 2px #234; }
    .thumb { background: #fff; border: 1px solid #5b6b86; box-shadow: 2px 2px 3px #0005; height: 112px; overflow: hidden; color: #111; font: 5px/6px "Liberation Sans", sans-serif; padding: 3px 5px 0 6px; position: relative; display: block; }
    .thead { border-bottom: 2px solid #f6b01a; height: 18px; display: flex; align-items: flex-end; font-size: 8px; line-height: 12px; padding-left: 5px; white-space: nowrap; position: relative; }
    .thouse { position: absolute; left: 0; bottom: 0; width: 16px; height: 19px; }
    .ti { font-style: italic; font-weight: 700; font-size: 7px; } .tt { font-size: 11px; line-height: 13px; padding-left: 7px; } .tb2 { font-weight: 700; font-size: 7px; padding-left: 6px; }
    .thead span { position: relative; }
    .mt { margin: 6px 0 5px; background: #2cc9a6; color: #fff; font: 700 6px/8px "Liberation Sans", sans-serif; display: flex; justify-content: center; white-space: nowrap; }
    .mrow { display: flex; gap: 18px; }
    .mrow table { border-collapse: collapse; font: 4px/5px "Liberation Sans", sans-serif; width: 69px; margin-left: 1px; flex: none; }
    .mrow td, .mrow th { border: 1px solid #1a7dba; padding: 0 1px; vertical-align: top; text-align: left; width: 50%; }
    .mrow tr:nth-child(even) { background: #cfe6f2; }
    .h15 { height: 15px; } .h18 { height: 18px; } .h9 { height: 9px; }
    .mlogo { display: flex; gap: 6px; margin-top: 12px; align-items: flex-start; }
    .mname { font: 600 19px/19px "Open Sans", sans-serif; color: #4b545b; display: flex; flex-direction: column; }
    .mname small { font-size: 7px; line-height: 7px; color: #b5b9bc; font-weight: 400; }
    .obox { margin: 9px 0 0 4px; width: 110px; background: #fcc77e; border: 1px solid #f0a420; font: 700 6px/7px "Liberation Sans", sans-serif; padding-left: 5px; }
    .intro { margin: 3px -4px 0 -2px; font-size: 4px; line-height: 5px; }
    .tools { display: grid; grid-template-columns: 23px 62px 36px 1fr; font-size: 4px; line-height: 5px; column-gap: 3px; row-gap: 2px; grid-auto-rows: 16px; margin-top: 1px; white-space: nowrap; align-items: center; }
    .tools > span { display: flex; justify-content: center; align-items: center; flex-direction: column; }
    .tools > span.lr { flex-direction: row; gap: 1px; }
    .lj { color: #2a4f8c; font: 5px/6px "Liberation Sans", sans-serif; } .lp { font-size: 8px; line-height: 10px; } .lz { color: #2d8cff; font: 700 5px/6px "Open Sans"; } .ls { font: 700 5px/6px "Open Sans"; }
    .tcols { display: flex; }
    .tbul { width: 82px; padding: 12px 0 0 6px; font: 700 4px/5px "Liberation Sans", sans-serif; }
    .tbul .ic { display: inline-block; margin-right: 1px; }
    .tchart { width: 98px; margin: 4px 0 0 auto; }
    .para { padding-left: 3px; margin-top: 4px; font-size: 4px; line-height: 5px; width: 145px; }
    .para.first { margin-top: 9px; }
    .art { position: absolute; right: 24px; top: 0; }
    .easy { padding: 22px 0 0 5px; font-size: 4px; white-space: nowrap; color: #555; }
    .awe { padding-left: 5px; font: 700 11px/14px "Liberation Sans"; color: #222; }

    .vs { width: 16px; flex: none; display: flex; flex-direction: column; align-items: center; justify-content: space-between; padding: 7px 0; background: linear-gradient(90deg, #6f93c4, #86a5d0); border-left: 1px solid #a9c4ea; }
    .knob { width: 14px; display: grid; place-items: center; background: linear-gradient(90deg, #f4f6f9, #c9d1dd); border: 1px solid #556a96; border-radius: 2px; }
    .k42 { height: 43px; margin-bottom: 88px; } .k12 { height: 12px; margin-bottom: 60px; }
    .split { width: 6px; flex: none; background: linear-gradient(90deg, #9cc0f0, #b3d4ff 60%, #5e86c0); }
    .right { flex: 1; display: flex; flex-direction: column; min-width: 0; }
    .srow { flex: 1; display: flex; min-height: 0; }
    .stage { flex: 1; padding: 17px 104px; background: radial-gradient(ellipse 900px 130px at 0 0, #bcd6f655 90%, transparent), linear-gradient(#a3c2ea, #8badda 25%, #5179b1 78%, #628dc8); display: flex; min-width: 0; }
    .navb { height: 48px; background: #a6c4f0; width: 16px; display: flex; flex-direction: column; align-items: center; justify-content: center; gap: 5px; flex: none; }
    .scol { display: flex; flex-direction: column; }
    .scol .vs { flex: 1; }
    .slide { flex: 1; background: #fff; position: relative; box-shadow: 3px 3px 6px #1b3350aa; display: flex; flex-direction: column; color: #000; min-width: 0; }
    .head { position: relative; padding: 36px 21px 1px 47px; flex: none; }
    .bigline { position: absolute; left: 24px; right: 19px; top: 85px; height: 8px; background: #f6b01a; }
    .bighouse { position: absolute; left: 24px; top: 2px; width: 76px; height: 90px; }
    .titlebox { position: relative; height: 55px; }
    .titlebox h1 { display: inline-block; margin: 2px 0 0 7px; padding-right: 17px; height: 53px; background: #8da4c980; font: 50px/50px "Liberation Sans", Arial, sans-serif; white-space: nowrap; }
    .frame { position: absolute; inset: 0; width: 100%; height: 100%; overflow: visible; }
    .hd { position: absolute; width: 10px; height: 10px; border: 1px solid #666f7a; border-radius: 50%; background: #fff; transform: translate(-50%, -50%); }
    .sq { width: 8px; height: 8px; border-radius: 1px; border: 1px solid #4f77a3; }
    .l0 { left: 0; } .l5 { left: 50%; } .l1 { left: 100%; } .y0 { top: 0; } .y5 { top: 50%; } .y1 { top: 100%; }
    .rot { position: absolute; left: 50%; top: -25px; width: 10px; height: 10px; margin-left: -5px; margin-top: -4px; border-radius: 50%; background: #79d422; border: 1px solid #3f7a1c; }
    .stem { position: absolute; left: 50%; top: -18px; height: 15px; width: 1px; background: #8295ab; }
    .autofit { position: absolute; left: -34px; top: 34px; width: 20px; height: 20px; background: #fff; border: 1px solid #f0b27a; display: grid; place-items: center; }
    .mini { position: absolute; left: 100px; top: 12px; width: 239px; height: 50px; border: 1px solid #9aa5b5; border-radius: 3px; background: #f1f5fa; opacity: .5; box-shadow: 2px 2px 3px #0003; padding: 2px; display: flex; flex-direction: column; gap: 2px; z-index: 3; }
    .mini .mr { display: flex; align-items: center; height: 22px; gap: 7px; }
    .mini .cf { width: 61px; } .mini .cs { width: 39px; }
    .mini .cf select { width: 48px; }
    .mini .mr .tb { border: 0; }
    .mini .mr2 { padding: 0 14px 0 6px; color: #111; justify-content: space-between; gap: 0; }
    .mini .hotbox { background: #f8c77c; border: 1px solid #c08f3a; padding: 3px; }
    .mini .combos { gap: 1px; }
    .content { flex: 1; display: grid; grid-template-columns: 346px minmax(0, 452px); justify-content: space-between; padding: 20px 22px 0 51px; align-items: start; }
    .bul { padding-top: 36px; font: 700 19px/22px "Liberation Sans", Arial, sans-serif; }
    .bul li { margin-bottom: 1px; }
    .ck { display: inline-block; width: 17px; height: 15px; vertical-align: baseline; }
    .chart { display: block; width: 100%; font-family: Lato, sans-serif; background: radial-gradient(circle at 76% 52%, #fdfdfe, #eceff2 40%, #dde2e6 70%, #d3d9df); }
    .notes { flex: none; display: flex; height: 29px; border-top: 6px solid #b0d2ff; }
    .notes textarea { flex: 1; resize: none; overflow: hidden; background: #fff; padding: 3px 0 0 9px; font: 15px/24px "Noto Sans", sans-serif; color: #000; border-top: 1px solid #6c94cf; border-left: 1px solid #6c94cf; display: block; height: 23px; }
    .notes textarea::placeholder { color: #000; opacity: 1; }
    .notes .vs { padding: 2px 0; }

    /* status */
    .status { height: 21px; flex: none; display: flex; align-items: stretch; line-height: 20px; border-top: 1px solid #5c83bf; background: linear-gradient(#e3eefc, #c9dcf6 40%, #a9c5ec 45%, #cfe2fb); color: #10307a; white-space: nowrap; }
    .st { border-right: 1px solid #8fb0dd; padding: 0 8px; display: flex; align-items: center; gap: 16px; }
    .st1 { width: 124px; } .st2 { width: 138px; } .st3 { width: 135px; }
    .stend { margin-left: auto; display: flex; align-items: center; background: linear-gradient(#b7cfee, #9ab8e0 50%, #84a7d8); padding: 0 6px 0 7px; border-left: 2px solid #7398cc; }
    .views { display: flex; border: 1px solid #83a4d3; background: #cfe0f6; height: 18px; }
    .views button { width: 18px; display: grid; place-items: center; }
    .views .hot { background: linear-gradient(#fdd9a0, #fdb64f); }
    .pct { width: 41px; text-align: center; }
    .zr { appearance: none; width: 103px; height: 14px; background: linear-gradient(#5876a8, #5876a8) center / 100% 1px no-repeat; }
    .zr::-webkit-slider-thumb { appearance: none; width: 9px; height: 12px; background: #e8f0fb; border: 1px solid #4a689c; border-radius: 1px 1px 5px 5px; }
    .fit { margin-left: 8px; }

    /* taskbar */
    .task { height: 40px; flex: none; display: flex; align-items: stretch; background: linear-gradient(90deg, #22333a, #25343a 60%, #262626 70%, #20302f); color: #fff; }
    .task button { display: grid; place-items: center; width: 48px; }
    .find { width: 343px; background: #f2f2f2; border: 1px solid #c8c8c8; display: flex; align-items: center; gap: 10px; padding-left: 12px; color: #333; font-size: 14px; }
    .find input { flex: 1; height: 30px; }
    .find input::placeholder { color: #333; opacity: 1; }
    .apps { display: flex; gap: 1px; margin-left: 3px; }
    .apps .run { box-shadow: inset 0 -2px #b9508f; }
    .apps .act { background: #4d575c; box-shadow: inset 0 -2px #b9508f; }
    .tray { margin-left: auto; display: flex; align-items: center; gap: 7px; }
    .fra { margin-left: 3px; }
    .clock { line-height: 19px; text-align: center; width: 72px; }
    .task .nb { width: 48px; }
    .tray .nb { margin-left: -7px; }
    .peek { width: 4px; align-self: stretch; border-left: 1px solid #5b686d; margin-left: -7px; }
  `;

  private group(cls: string, label: string, body: unknown, launcher = true) {
    return html`<section class="group ${cls}"><div class="gbody">${body}</div>
      <div class="glabel"><span>${label}</span>${launcher ? I.launcher() : null}</div></section>`;
  }
  private item(icon: unknown, label: string, arrow = false) {
    return html`<button class="item"><span class="slot">${icon}</span>${label}${arrow ? caret : null}</button>`;
  }
  private combo(cls: string, label: string, value: string) {
    return html`<label class="combo ${cls}"><select aria-label=${label}><option>${value}</option></select>${caret}</label>`;
  }
  private tick(up: boolean) {
    return html`<svg class="ic tick" width="5" height="3" viewBox="0 0 5 3"><path d=${up ? "M0 3h5L2.500 0z" : "M0 0h5L2.500 3z"} fill="#35519b"/></svg>`;
  }

  private ribbon() {
    return html`<div class="ribbon">
      ${this.group("w1", "Presse-papiers", html`
        <button class="big bigc"><span class="pic">${I.paste()}</span>Coller${caret}</button>
        <div class="col">${this.item(I.cut(), "")}${this.item(I.copy(), "")}${this.item(I.brush(), "")}</div>`)}
      ${this.group("w2", "Diapositives", html`
        <button class="big bign"><span class="pic">${I.newSlide()}</span>Nouvelle<span class="row">diapositive ${caret}</span></button>
        <div class="col">${this.item(I.layout(), "Disposition", true)}${this.item(I.reset(), "Rétablir")}${this.item(I.del(), "Supprimer")}</div>`, false)}
      ${this.group("w3", "Police", html`<div class="stack">
        <div class="bar"><div class="combos">${this.combo("cf", "Police", "Arial (En-têtes)")}${this.combo("cs", "Taille", "54")}</div>
          <div class="tg g44"><button class="tb serif big-a">A${this.tick(true)}</button><button class="tb serif small-a">A${this.tick(false)}</button></div>
          <div class="tg g24"><button class="tb" aria-label="Effacer">${I.clear()}</button></div></div>
        <div class="bar"><div class="tg g181">
          <button class="tb t24 b">G</button><button class="tb t24 serif i">I</button><button class="tb t24 serif u">S</button><button class="tb t24 serif s">abc</button><button class="tb t24 b sh">S</button>
          <button class="tb"><span class="av">AV${ic(16, 5, svg`<path d="M0 2.500h16M3 0L.5 2.500 3 5M13 0l2.500 2.500L13 5" stroke="#2f5fc9" fill="none"/>`)}</span>${caret}</button>
          <button class="tb serif">Aa${caret}</button></div>
          <div class="tg g36"><button class="tb"><span class="fc">A</span>${caret}</button></div></div></div>`)}
      ${this.group("w4", "Paragraphe", html`<div class="stack">
        <div class="bar"><div class="tg g67"><button class="tb">${I.bullets()}${caret}</button><button class="tb">${I.numbers()}${caret}</button></div>
          <div class="tg g44"><button class="tb">${I.outdent()}</button><button class="tb">${I.indent()}</button></div>
          <div class="tg g32"><button class="tb">${I.spacing()}${caret}</button></div></div>
        <div class="bar"><div class="tg g101"><button class="tb hot">${I.left()}</button><button class="tb">${I.center()}</button><button class="tb">${I.right()}</button><button class="tb">${I.justify()}${caret}</button></div>
          <div class="tg g44"><button class="tb hot">${I.ltr()}</button><button class="tb">${I.rtl()}</button></div>
          <div class="tg g32"><button class="tb">${I.columns()}${caret}</button></div></div></div>
        <div class="col side">${[I.textdir(), I.valign(), I.smartart()].map((x) => html`<button class="item">${x}${caret}</button>`)}</div>`)}
      ${this.group("w5", "Dessin", html`
        <div class="gallery"><div class="shapes">${shapeDefs.map((s) => ic(16, 17, s))}</div>
          <div class="gscroll"><button aria-label="Haut">${ic(5, 3, svg`<path d="M0 3h5L2.500 0z" fill="#a3a7ad"/>`)}</button><button aria-label="Bas">${ic(5, 3, svg`<path d="M0 0h5L2.500 3z" fill="#4c77bd"/>`)}</button><button aria-label="Plus">${ic(7, 7, svg`<path d="M0 .5h7M0 3h7L3.500 6.500z" fill="#4c77bd" stroke="#4c77bd" stroke-width=".6"/>`)}</button></div></div>
        <button class="big bigo side"><span class="pic">${I.arrange()}</span>Organiser${caret}</button>
        <button class="big bigs"><span class="pic">${I.styles()}</span>Styles<span class="row">rapides ${caret}</span></button>
        <div class="col">${this.item(I.fill(), "Remplissage de forme", true)}${this.item(I.pen(), "Contour de forme", true)}${this.item(I.effects(), "Effets sur la forme", true)}</div>`)}
      ${this.group("w6", "Modification", html`
        <div class="col">${this.item(I.find(), "Rechercher")}${this.item(I.replace(), "Remplacer", true)}${this.item(I.select(), "Sélectionner", true)}</div>`, false)}
    </div>`;
  }

  private thumbs() {
    const q = "Quels sont les outils du travail collaboratif ?";
    const head = (cls: string, t: string) => html`<div class="thead ${cls}">${house("thouse")}<span>${t}</span></div>`;
    const slides: [number, unknown][] = [
      [14, html`${head("ti", q)}<div class="mt">MeisterTask : L'outil de gestion de tâches en ligne le plus intuitif</div>
        <div class="mrow"><table>
          <tr class="h15"><th>Adresse</th><th>MeisterTask.com</th></tr><tr class="h15"><th>Type de site</th><td>Outil de gestion de projet</td></tr>
          <tr class="h18"><th>Propriétaire</th><td>Michael Hollauf et Till Vollmer</td></tr><tr class="h9"><th>Lancement</th><td>2015</td></tr><tr class="h9"><th>Etat actuel</th><td>actif</td></tr></table>
          <div class="mlogo">${ic(28, 28, svg`<path d="M5 3Q14-1 23 2Q29 6 27 15Q26 25 18 27Q9 29 4 22Q-2 13 1 7Q2 4 5 3z" fill="#0da4fb"/><path d="M7 14l5 5 9-9" stroke="#fff" stroke-width="3" fill="none"/>`)}<span class="mname"><small>meister</small>task</span></div></div>`],
      [15, html`${head("ti", q)}<div class="obox">Autres outils de travail collaboratif</div>
        <p class="intro">Voici une sélection d'<b>outils pratiques et simples pour faciliter le travail d'équipe</b>, même quand certains sont à distance.</p>
        <div class="tools">
          <span>${ic(13, 12, svg`<rect x="7" y="4" width="6" height="7" rx="2" fill="#7b83eb"/><circle cx="8" cy="2" r="2" fill="#7b83eb"/><rect y="3" width="8" height="8" fill="#4b53bc"/><path d="M2 5h4M4 5v4" stroke="#fff"/>`)}</span><p><b>Microsoft Teams :</b><br>la plateforme pour le travail d'équipe</p>
          <span class="lj lr">${ic(5, 8, svg`<path d="M2.500 0L5 4 2.500 8 0 4z" fill="#2a7de1"/>`)}Jira Software</span><p><b>Jira :</b><br>la gestion de projet en mode agile</p>
          <span class="lz">${ic(10, 9, svg`<circle cx="5" cy="4.500" r="4.500" fill="#2d8cff"/><rect x="2" y="3" width="4" height="3.500" fill="#fff"/><path d="M6.500 4.500l2-1.500v3z" fill="#fff"/>`)}zoom</span><p><b>Zoom :</b><br>animer des réunions en visioconférence</p>
          <span>${ic(10, 7, svg`<rect x="0" y="1" width="6" height="5" fill="#f58a1f"/><circle cx="7" cy="4" r="2" fill="none" stroke="#f58a1f"/>`)}bonobowat</span><p><b>Reshot :</b> l'outil pour animer<br>des réunions collaboratives à<br>distance</p>
          <span class="ls lr">${ic(5, 5, svg`<path d="M1.500 0v2.500" stroke="#36c5f0"/><path d="M2.500 1.500H5" stroke="#2eb67d"/><path d="M3.500 2.500V5" stroke="#ecb22e"/><path d="M0 3.500h2.500" stroke="#e01e5a"/>`)}slack</span><p><b>Slack :</b><br>l'outil de messagerie collaboratif</p>
          <span class="lj lp">ProjeQtOr</span><p><b>projeqtor</b></p></div>`],
      [16, html`${head("tt", "Avantages outils collaboratifs")}<div class="tcols"><div class="tbul">${bulletItems.map(([t]) => html`<div>${ic(4, 3, svg`<path d="M0 1.500l1.500 1.500L4 0" fill="none" stroke="#000" stroke-width=".6"/>`)}${t}</div>`)}</div><div class="tchart">${chart()}</div></div>`],
      [17, html`${head("tb2", "les inconvénients des outils de travail collaboratifs")}
        <p class="para first"><b>Augmenter la compétitivité des employés envers eux-mêmes</b>: les salariés ont la possibilité grâce au travail collaboratif d'effectuer leurs tâches plus rapidement. Ils sont toujours en train d'essayer de se surpasser.</p>
        <p class="para"><b>Déséquilibre entre la vie privée et la vie professionnelle</b>: les salariés peuvent travailler soit de leur domicile soit de leur bureau.</p>
        <p class="para"><b>Paresse sociale</b>: certains peuvent être moins productifs que d'autres.</p>`],
      [18, html`<svg class="ic art" width="101" height="50" viewBox="0 0 101 50" aria-hidden="true"><path d="M0 0h80l20 5-6 10 4 6-10 9 3 8v12H36z" fill="#9fc0bb"/><path d="M0 0h17l42 50H40zM32 0h18l44 44-6 6h-9zM70 0h18l12 14v10z" fill="#d9b33d"/><path d="M17 0l42 50M32 0l44 50M50 0l44 44M70 0l30 24" stroke="#fff" stroke-width="1.500"/><rect x="34" y="10" width="22" height="14" fill="#eef1f2" stroke="#444" stroke-width="2"/><circle cx="78" cy="36" r="6" fill="#f5a623"/><circle cx="78" cy="34" r="3" fill="#fbe0c0"/><circle cx="50" cy="42" r="6" fill="#222"/><circle cx="50" cy="45" r="5" fill="#c0392b"/><rect x="80" y="10" width="19" height="12" fill="#f3ece6" opacity=".8"/></svg><div class="easy">EASY TO CHANGE COLORS, PHOTOS</div><div class="awe">AWESOME</div>`],
    ];
    return slides.map(([n, c]) => html`<div class=${classMap({ trow: true, sel: n === 16 })}><span class="num">${n}</span><div class="thumb">${c}</div></div>`);
  }

  private tri(up: boolean, c = "#3f5688") {
    return ic(9, 5, svg`<path d=${up ? "M0 5h9L4.500 0z" : "M0 0h9L4.500 5z"} fill=${c} />`);
  }

  render() {
    const tabs = ["Insertion", "Création", "Animations", "Diaporama", "Révision", "Affichage", "Création de plan conceptuel"];
    return html`<div class="app">
      <button class="office" aria-label="Bouton Office">${I.office()}</button>
      <header class="titlebar">
        <div class="qatwrap"><div class="qat"><button aria-label="Enregistrer">${I.save()}</button><button class="undo" aria-label="Annuler">${I.undo()}${caret}</button><button aria-label="Répéter">${I.redo()}</button></div><button aria-label="Personnaliser">${I.qat()}</button></div>
        <div class="apptitle">ppp.pptx&nbsp; - &nbsp;Microsoft PowerPoint</div>
        <div class="winbtns">
          <button aria-label="Réduire">${ic(11, 11, svg`<path d="M0 6.500h10" stroke="#000"/>`)}</button>
          <button aria-label="Restaurer">${ic(11, 11, svg`<path d="M.5 2.500h7.500v8H.5zM2.500 2.500v-2H10.500v8H8" fill="none" stroke="#000"/>`)}</button>
          <button aria-label="Fermer">${ic(11, 11, svg`<path d="M.5.5l10 10M10.500.5l-10 10" stroke="#000" stroke-width="1.200"/>`)}</button></div>
      </header>
      <nav class="tabs"><button class="tab on">Accueil</button>${tabs.map((t) => html`<button class="tab">${t}</button>`)}
        <div class="ctx"><span class="ctxlabel">Outils de dessin</span><button class="tab">Format</button></div>
        <button class="help" aria-label="Aide">${I.help()}</button></nav>
      ${this.ribbon()}
      <main class="work">
        <aside class="pane">
          <div class="ptabs"><button class="ptab">Diapositives</button><button class="ptab2">Plan</button><button class="pclose">x</button></div>
          <div class="pbody"><div class="thumbs">${this.thumbs()}</div>
            <div class="vs">${this.tri(true)}<div class="knob k42">${ic(8, 8, svg`<path d="M0 .5h8M0 3h8M0 5.500h8" stroke="#6a7690"/>`)}</div>${this.tri(false)}</div></div>
        </aside>
        <div class="split"></div>
        <div class="right">
          <div class="srow">
            <div class="stage"><article class="slide">
              <div class="head"><div class="bigline"></div>${house("bighouse")}
                <div class="titlebox"><h1>Avantages outils collaboratifs</h1>
                  <svg class="frame"><rect width="100%" height="100%" fill="none" stroke="#4f77a3" stroke-dasharray="8 4" shape-rendering="crispEdges"/></svg>
                  <i class="stem"></i><i class="rot"></i>
                  <i class="hd l0 y0"></i><i class="hd l1 y0"></i><i class="hd l0 y1"></i><i class="hd l1 y1"></i>
                  <i class="hd sq l5 y0"></i><i class="hd sq l5 y1"></i><i class="hd sq l0 y5"></i><i class="hd sq l1 y5"></i>
                  <button class="autofit" aria-label="Ajustement">${ic(13, 14, svg`<path d="M0 6h13M0 8.500h13" stroke="#444"/><path d="M6.500 0v4M4.500 2.500l2 2 2-2M6.500 14v-4M4.500 12l2-2 2 2" stroke="#1b2f8c" stroke-width="1.400" fill="none"/>`)}</button>
                </div></div>
              <div class="content">
                <ul class="bul">${bulletItems.map(([t, sp]) => html`<li><span class="ck">${ic(16, 15, svg`<path d="M1.500 9l2-1 2 3.500Q8.500 4 14.500 0Q9 6 6 14.500H5z" fill="#000"/>`)}</span>${sp ? html`&nbsp;` : ""}${t}</li>`)}</ul>
                ${chart()}
              </div>
              <div class="mini">
                <div class="mr"><div class="combos">${this.combo("cf", "Police", "Arial (En")}${this.combo("cs", "Taille", "54")}</div>
                  <span class="tb serif big-a">A${this.tick(true)}</span><span class="tb serif small-a">A${this.tick(false)}</span><span class="tb">${I.fill()}${caret}</span><span class="tb">${I.pen()}${caret}</span>${I.brush()}</div>
                <div class="mr mr2"><span class="b">G</span><span class="serif i">I</span><span class="hotbox">${I.left()}</span>${I.center()}${I.right()}<span class="serif big-a">A</span>${caret}${I.outdent()}${I.indent()}${I.bullets()}${caret}</div>
              </div>
            </article></div>
            <div class="scol"><div class="vs">${this.tri(true)}<div class="knob k12">${ic(8, 8, svg`<path d="M0 1.500h8M0 4h8M0 6.500h8" stroke="#6a7690"/>`)}</div>${this.tri(false)}</div>
              <div class="navb">${ic(7, 10, svg`<path d="M0 4h7L3.500 0zM0 9.500h7L3.500 5.500z"/>`)}${ic(7, 10, svg`<path d="M0 0h7L3.500 4zM0 5.500h7L3.500 9.500z"/>`)}</div></div>
          </div>
          <div class="notes"><textarea aria-label="Commentaires" rows="1" placeholder="Cliquez pour ajouter des commentaires"></textarea><div class="vs">${this.tri(true)}${this.tri(false)}</div></div>
        </div>
      </main>
      <footer class="status">
        <span class="st st1">Diapositive 16 sur 36</span><span class="st st2">"Contents Slide Master"</span><span class="st st3">${I.spell()}Français (France)</span>
        <div class="stend"><div class="views">
            <button class="hot" aria-label="Normal">${ic(12, 11, svg`<path d="M.5.5h11v10H.5zM4 .5v10M4 7.500h7.500" fill="#fff" stroke="#444"/>`)}</button>
            <button aria-label="Trieuse">${ic(12, 10, svg`<path d="M.5.5h4v3h-4zM7 .5h4v3H7zM.5 6h4v3h-4zM7 6h4v3H7z" fill="#fff" stroke="#444"/>`)}</button>
            <button aria-label="Diaporama">${ic(12, 12, svg`<path d="M0 .5h12M1.500 1v5.500h9V1M6 7v3M3 11.500L6 9l3 2.500" fill="#fff" stroke="#444"/>`)}</button></div>
          <span class="pct">70 %</span>
          <button aria-label="Zoom arrière">${ic(16, 16, svg`<circle cx="8" cy="8" r="7" fill="#dfe9f7" stroke="#4f6c9e"/><path d="M4.500 8h7" stroke="#334d7c" stroke-width="2"/>`)}</button>
          <input class="zr" type="range" aria-label="Zoom" min="10" max="200" value="78">
          <button aria-label="Zoom avant">${ic(16, 16, svg`<circle cx="8" cy="8" r="7" fill="#dfe9f7" stroke="#4f6c9e"/><path d="M4.500 8h7M8 4.500v7" stroke="#334d7c" stroke-width="2"/>`)}</button>
          <button class="fit" aria-label="Ajuster">${ic(16, 15, svg`<rect x=".5" y=".5" width="15" height="14" fill="#fff" stroke="#555" stroke-dasharray="2 1"/><path d="M8 2v3M8 10v3M3 7.500h3M10 7.500h3M3 3l2 2M13 3l-2 2M3 12l2-2M13 12l-2-2" stroke="#444"/>`)}</button></div>
      </footer>
      <footer class="task">
        <button aria-label="Démarrer">${T.win()}</button>
        <label class="find">${T.search()}<input type="text" placeholder="Rechercher" aria-label="Rechercher"></label>
        <button aria-label="Cortana">${T.cortana()}</button><button aria-label="Vue des tâches">${T.taskview()}</button>
        <div class="apps">${[T.edge, T.explorer, T.mail, T.store, T.chrome, T.firefox, T.media, T.ms365, T.ppt].map((f, i) => html`<button class=${classMap({ run: i === 4, act: i === 8 })}>${f()}</button>`)}</div>
        <div class="tray">${T.cloud()}${T.shield()}${T.battery()}${T.sound()}${T.net()}${T.dish()}<span class="fra">FRA</span><div class="clock">12:01<br>22/11/2020</div><button class="nb" aria-label="Notifications">${T.notif()}</button><i class="peek"></i></div>
      </footer>
    </div>`;
  }
}
